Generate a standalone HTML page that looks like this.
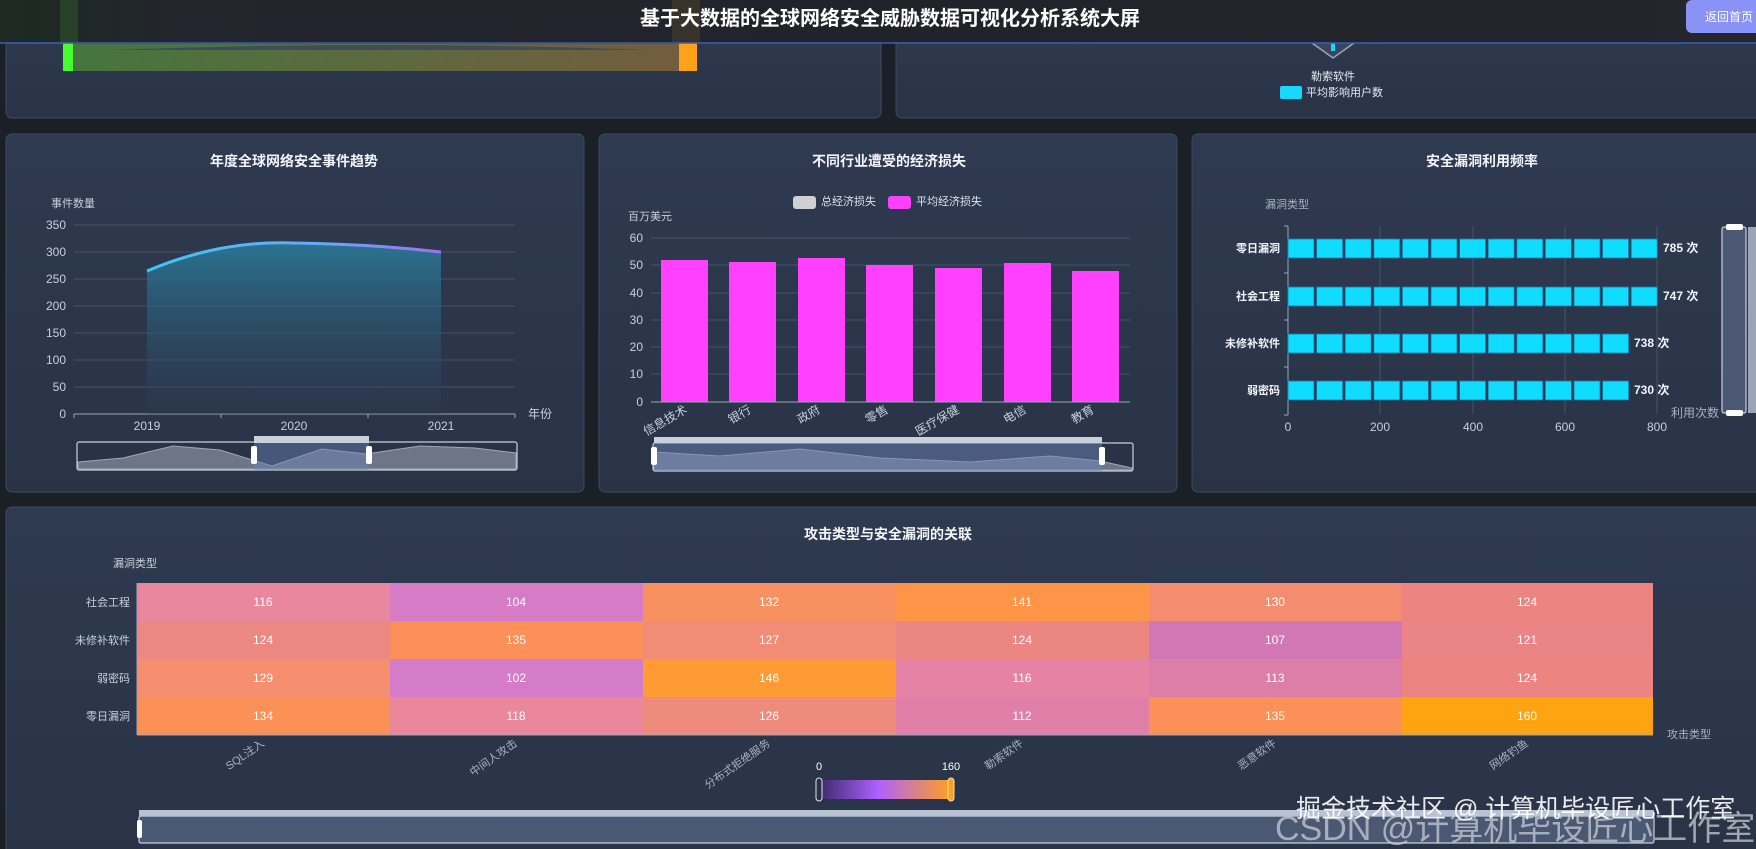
<!DOCTYPE html>
<html><head><meta charset="utf-8"><style>
html,body{margin:0;padding:0;background:#1b1f26;width:1756px;height:849px;overflow:hidden;font-family:"Liberation Sans","Noto Sans CJK SC",sans-serif}
svg{display:block}
</style></head><body>
<svg width="1756" height="849" viewBox="0 0 1756 849" xmlns="http://www.w3.org/2000/svg" font-family="Liberation Sans, Noto Sans CJK SC, sans-serif">
<defs>
<linearGradient id="cardg" x1="0" y1="0" x2="0" y2="1"><stop offset="0" stop-color="#2e3a50"/><stop offset="1" stop-color="#2a3346"/></linearGradient>
<linearGradient id="band" x1="0" y1="0" x2="1" y2="0"><stop offset="0" stop-color="#4e8a3a"/><stop offset="1" stop-color="#8a6a3a"/></linearGradient>
<linearGradient id="line1" x1="0" y1="0" x2="1" y2="0"><stop offset="0" stop-color="#3cc8f0"/><stop offset="0.6" stop-color="#6aa8f6"/><stop offset="1" stop-color="#a070f0"/></linearGradient>
<linearGradient id="area1" x1="0" y1="0" x2="0" y2="1"><stop offset="0" stop-color="#2a7a9a" stop-opacity="0.9"/><stop offset="1" stop-color="#2e3a50" stop-opacity="0.3"/></linearGradient>
<linearGradient id="vm" x1="0" y1="0" x2="1" y2="0"><stop offset="0" stop-color="#3a2a6a"/><stop offset="0.45" stop-color="#b060ff"/><stop offset="1" stop-color="#ffa020"/></linearGradient>
<linearGradient id="hdr" x1="0" y1="0" x2="1" y2="0"><stop offset="0" stop-color="#1e2a22"/><stop offset="0.1" stop-color="#23262c"/><stop offset="0.5" stop-color="#202329"/><stop offset="1" stop-color="#23262c"/></linearGradient>
</defs>
<rect width="1756" height="849" fill="#1b1f26"/>

<rect x="6" y="20" width="875" height="98" rx="6" fill="url(#cardg)" stroke="#3e4b62"/>
<rect x="896" y="20" width="870" height="98" rx="6" fill="url(#cardg)" stroke="#3e4b62"/>
<rect x="73" y="44" width="606" height="27" fill="url(#band)" opacity="0.75"/>
<path d="M110 50 Q380 40 650 50 Z" fill="#3a4660" opacity="0.8"/>
<rect x="63" y="43" width="10" height="28" fill="#44ff2a"/>
<rect x="679" y="43" width="18" height="28" fill="#ffa21a"/>
<path d="M1312 43 L1333 58 L1354 43" fill="#3a4660" stroke="#9aa6b8" stroke-width="1.5"/>
<rect x="1331" y="43" width="4" height="8" fill="#18d8ff"/>
<text x="1333" y="80" font-size="11" fill="#e8ecf2" text-anchor="middle">勒索软件</text>
<rect x="1280" y="86" width="22" height="13" rx="2" fill="#18d8ff"/>
<text x="1306" y="96" font-size="11" fill="#e8ecf2">平均影响用户数</text>

<rect x="0" y="0" width="1756" height="43" fill="url(#hdr)"/>
<rect x="60" y="0" width="18" height="43" fill="#2f5a2a" opacity="0.5"/>
<rect x="672" y="0" width="28" height="43" fill="#5a4a2a" opacity="0.4"/>
<line x1="0" y1="43" x2="1756" y2="43" stroke="#3b5fb8" stroke-width="1.5"/>
<text x="890" y="25" font-size="20" font-weight="bold" fill="#ffffff" text-anchor="middle">基于大数据的全球网络安全威胁数据可视化分析系统大屏</text>
<rect x="1686" y="0" width="80" height="33" rx="6" fill="#8a92f6"/>
<text x="1705" y="21" font-size="12" fill="#ffffff">返回首页</text>

<rect x="6" y="134" width="578" height="358" rx="6" fill="url(#cardg)" stroke="#3e4b62"/>
<text x="294" y="166" font-size="14" font-weight="bold" fill="#f2f4f8" text-anchor="middle">年度全球网络安全事件趋势</text>
<text x="51" y="207" font-size="11" fill="#c8d0dc">事件数量</text>
<g stroke="#46536a" stroke-width="1">
<line x1="74" y1="225" x2="515" y2="225"/><line x1="74" y1="252" x2="515" y2="252"/><line x1="74" y1="279" x2="515" y2="279"/><line x1="74" y1="306" x2="515" y2="306"/><line x1="74" y1="333" x2="515" y2="333"/><line x1="74" y1="360" x2="515" y2="360"/><line x1="74" y1="387" x2="515" y2="387"/>
</g>
<line x1="74" y1="414" x2="515" y2="414" stroke="#9aa6b8"/>
<g stroke="#9aa6b8"><line x1="74" y1="414" x2="74" y2="418"/><line x1="221" y1="414" x2="221" y2="418"/><line x1="368" y1="414" x2="368" y2="418"/><line x1="515" y1="414" x2="515" y2="418"/></g>
<g font-size="12" fill="#c8d0dc" text-anchor="end">
<text x="66" y="229">350</text><text x="66" y="256">300</text><text x="66" y="283">250</text><text x="66" y="310">200</text><text x="66" y="337">150</text><text x="66" y="364">100</text><text x="66" y="391">50</text><text x="66" y="418">0</text>
</g>
<g font-size="12" fill="#c8d0dc" text-anchor="middle"><text x="147" y="430">2019</text><text x="294" y="430">2020</text><text x="441" y="430">2021</text></g>
<text x="528" y="418" font-size="12" fill="#c8d0dc">年份</text>
<path d="M147 271 Q220 240 294 243 Q370 244 441 252 L441 414 L147 414 Z" fill="url(#area1)"/>
<path d="M147 271 Q220 240 294 243 Q370 244 441 252" fill="none" stroke="url(#line1)" stroke-width="3"/>
<rect x="77" y="442" width="440" height="28" rx="2" fill="#2a3346" stroke="#c8d0dc" stroke-width="1.2"/>
<path d="M78 462 L123 458 L173 446 L220 450 L272 466 L322 449 L366 454 L420 446 L475 448 L516 453 L516 469 L78 469 Z" fill="#6e7686" stroke="#a0a8b8"/>
<rect x="254" y="443" width="115" height="27" fill="#6b82b8" opacity="0.45"/>
<rect x="254" y="436" width="115" height="7" fill="#c8d0dc"/>
<rect x="251" y="446" width="6" height="18" rx="2" fill="#fff"/><rect x="366" y="446" width="6" height="18" rx="2" fill="#fff"/>

<rect x="599" y="134" width="578" height="358" rx="6" fill="url(#cardg)" stroke="#3e4b62"/>
<text x="889" y="166" font-size="14" font-weight="bold" fill="#f2f4f8" text-anchor="middle">不同行业遭受的经济损失</text>
<rect x="793" y="196" width="23" height="13" rx="3" fill="#d0d0d4"/>
<text x="821" y="205" font-size="11" fill="#dde2ea">总经济损失</text>
<rect x="888" y="196" width="23" height="13" rx="3" fill="#ff40ff"/>
<text x="916" y="205" font-size="11" fill="#dde2ea">平均经济损失</text>
<text x="628" y="220" font-size="11" fill="#c8d0dc">百万美元</text>
<g stroke="#46536a"><line x1="651" y1="238" x2="1130" y2="238"/><line x1="651" y1="265" x2="1130" y2="265"/><line x1="651" y1="293" x2="1130" y2="293"/><line x1="651" y1="320" x2="1130" y2="320"/><line x1="651" y1="347" x2="1130" y2="347"/><line x1="651" y1="374" x2="1130" y2="374"/></g>
<g font-size="12" fill="#c8d0dc" text-anchor="end"><text x="643" y="242">60</text><text x="643" y="269">50</text><text x="643" y="297">40</text><text x="643" y="324">30</text><text x="643" y="351">20</text><text x="643" y="378">10</text><text x="643" y="406">0</text></g>
<g fill="#ff40ff">
<rect x="661" y="260" width="47" height="142"/><rect x="729" y="262" width="47" height="140"/><rect x="798" y="258" width="47" height="144"/><rect x="866" y="265" width="47" height="137"/><rect x="935" y="268" width="47" height="134"/><rect x="1004" y="263" width="47" height="139"/><rect x="1072" y="271" width="47" height="131"/>
</g>
<line x1="651" y1="402" x2="1130" y2="402" stroke="#9aa6b8"/>
<g font-size="12" fill="#c8d0dc" text-anchor="end">
<text transform="translate(688,412) rotate(-30)">信息技术</text>
<text transform="translate(752,412) rotate(-30)">银行</text>
<text transform="translate(821,412) rotate(-30)">政府</text>
<text transform="translate(889,412) rotate(-30)">零售</text>
<text transform="translate(960,412) rotate(-30)">医疗保健</text>
<text transform="translate(1027,412) rotate(-30)">电信</text>
<text transform="translate(1095,412) rotate(-30)">教育</text>
</g>
<rect x="653" y="443" width="480" height="28" rx="2" fill="#2a3346" stroke="#c8d0dc" stroke-width="1.2"/>
<path d="M654 452 L720 456 L800 449 L880 458 L970 462 L1050 456 L1100 461 L1132 468 L1132 470 L654 470 Z" fill="#6e7686" stroke="#a0a8b8"/>
<rect x="654" y="443" width="448" height="28" fill="#6b82b8" opacity="0.5"/>
<rect x="654" y="437" width="448" height="6" fill="#c8d0dc"/>
<rect x="651" y="447" width="6" height="18" rx="2" fill="#fff"/><rect x="1099" y="447" width="6" height="18" rx="2" fill="#fff"/>

<rect x="1192" y="134" width="580" height="358" rx="6" fill="url(#cardg)" stroke="#3e4b62"/>
<text x="1482" y="166" font-size="14" font-weight="bold" fill="#f2f4f8" text-anchor="middle">安全漏洞利用频率</text>
<text x="1287" y="208" font-size="11" fill="#a8b2c2" text-anchor="middle">漏洞类型</text>
<g stroke="#46536a"><line x1="1380" y1="226" x2="1380" y2="414"/><line x1="1473" y1="226" x2="1473" y2="414"/><line x1="1565" y1="226" x2="1565" y2="414"/><line x1="1657" y1="226" x2="1657" y2="414"/></g>
<line x1="1288" y1="226" x2="1288" y2="415" stroke="#9aa6b8"/>
<g stroke="#9aa6b8"><line x1="1284" y1="226" x2="1288" y2="226"/><line x1="1284" y1="273" x2="1288" y2="273"/><line x1="1284" y1="320" x2="1288" y2="320"/><line x1="1284" y1="367" x2="1288" y2="367"/><line x1="1284" y1="415" x2="1288" y2="415"/></g>
<g id="seg13" fill="#10dcff" stroke="#1478a8" stroke-width="0.8">
<rect x="1288" y="239" width="26" height="19"/><rect x="1316.6" y="239" width="26" height="19"/><rect x="1345.2" y="239" width="26" height="19"/><rect x="1373.8" y="239" width="26" height="19"/><rect x="1402.4" y="239" width="26" height="19"/><rect x="1431" y="239" width="26" height="19"/><rect x="1459.6" y="239" width="26" height="19"/><rect x="1488.2" y="239" width="26" height="19"/><rect x="1516.8" y="239" width="26" height="19"/><rect x="1545.4" y="239" width="26" height="19"/><rect x="1574" y="239" width="26" height="19"/><rect x="1602.6" y="239" width="26" height="19"/><rect x="1631.2" y="239" width="26" height="19"/>
</g>
<use href="#seg13" y="48"/>
<g fill="#10dcff" stroke="#1478a8" stroke-width="0.8" id="seg12">
<rect x="1288" y="334" width="26" height="19"/><rect x="1316.6" y="334" width="26" height="19"/><rect x="1345.2" y="334" width="26" height="19"/><rect x="1373.8" y="334" width="26" height="19"/><rect x="1402.4" y="334" width="26" height="19"/><rect x="1431" y="334" width="26" height="19"/><rect x="1459.6" y="334" width="26" height="19"/><rect x="1488.2" y="334" width="26" height="19"/><rect x="1516.8" y="334" width="26" height="19"/><rect x="1545.4" y="334" width="26" height="19"/><rect x="1574" y="334" width="26" height="19"/><rect x="1602.6" y="334" width="26" height="19"/>
</g>
<use href="#seg12" y="47"/>
<g font-size="11" font-weight="bold" fill="#f2f4f8" text-anchor="end"><text x="1280" y="252">零日漏洞</text><text x="1280" y="300">社会工程</text><text x="1280" y="347">未修补软件</text><text x="1280" y="394">弱密码</text></g>
<g font-size="12" font-weight="bold" fill="#f2f4f8"><text x="1663" y="252">785 次</text><text x="1663" y="300">747 次</text><text x="1634" y="347">738 次</text><text x="1634" y="394">730 次</text></g>
<g font-size="12" fill="#c8d0dc" text-anchor="middle"><text x="1288" y="431">0</text><text x="1380" y="431">200</text><text x="1473" y="431">400</text><text x="1565" y="431">600</text><text x="1657" y="431">800</text></g>
<text x="1671" y="417" font-size="12" fill="#a8b2c2">利用次数</text>
<rect x="1722" y="227" width="24" height="186" rx="2" fill="#4a5874" stroke="#c8d0dc" stroke-width="1.2"/>
<rect x="1748" y="227" width="10" height="186" fill="#9aa6b8"/>
<rect x="1726" y="224" width="17" height="6" rx="2" fill="#fff"/><rect x="1726" y="410" width="17" height="6" rx="2" fill="#fff"/>

<rect x="6" y="507" width="1760" height="350" rx="6" fill="url(#cardg)" stroke="#3e4b62"/>
<text x="888" y="539" font-size="14" font-weight="bold" fill="#f2f4f8" text-anchor="middle">攻击类型与安全漏洞的关联</text>
<text x="113" y="567" font-size="11" fill="#c8d0dc">漏洞类型</text>
<g>
<rect x="137" y="583" width="253" height="38" fill="#e9879e"/><rect x="390" y="583" width="253" height="38" fill="#d67cc6"/><rect x="643" y="583" width="253" height="38" fill="#f99060"/><rect x="896" y="583" width="253" height="38" fill="#fd9447"/><rect x="1149" y="583" width="253" height="38" fill="#f48d6f"/><rect x="1402" y="583" width="251" height="38" fill="#ec8582"/>
<rect x="137" y="621" width="253" height="38" fill="#ec8882"/><rect x="390" y="621" width="253" height="38" fill="#fb9158"/><rect x="643" y="621" width="253" height="38" fill="#f18c77"/><rect x="896" y="621" width="253" height="38" fill="#ec8682"/><rect x="1149" y="621" width="253" height="38" fill="#d077b4"/><rect x="1402" y="621" width="251" height="38" fill="#eb8585"/>
<rect x="137" y="659" width="253" height="38" fill="#f68e70"/><rect x="390" y="659" width="253" height="38" fill="#d57cc8"/><rect x="643" y="659" width="253" height="38" fill="#fe9b35"/><rect x="896" y="659" width="253" height="38" fill="#e682a4"/><rect x="1149" y="659" width="253" height="38" fill="#dc7ea8"/><rect x="1402" y="659" width="251" height="38" fill="#ec8582"/>
<rect x="137" y="697" width="253" height="38" fill="#fb9157"/><rect x="390" y="697" width="253" height="38" fill="#ea879a"/><rect x="643" y="697" width="253" height="38" fill="#ef8b7c"/><rect x="896" y="697" width="253" height="38" fill="#e07fa8"/><rect x="1149" y="697" width="253" height="38" fill="#fb9158"/><rect x="1402" y="697" width="251" height="38" fill="#fea411"/>
</g>
<g font-size="12" fill="#ffffff" text-anchor="middle">
<text x="263" y="606">116</text><text x="516" y="606">104</text><text x="769" y="606">132</text><text x="1022" y="606">141</text><text x="1275" y="606">130</text><text x="1527" y="606">124</text>
<text x="263" y="644">124</text><text x="516" y="644">135</text><text x="769" y="644">127</text><text x="1022" y="644">124</text><text x="1275" y="644">107</text><text x="1527" y="644">121</text>
<text x="263" y="682">129</text><text x="516" y="682">102</text><text x="769" y="682">146</text><text x="1022" y="682">116</text><text x="1275" y="682">113</text><text x="1527" y="682">124</text>
<text x="263" y="720">134</text><text x="516" y="720">118</text><text x="769" y="720">126</text><text x="1022" y="720">112</text><text x="1275" y="720">135</text><text x="1527" y="720">160</text>
</g>
<line x1="137" y1="583" x2="137" y2="735" stroke="#9aa6b8"/>
<line x1="137" y1="735" x2="1653" y2="735" stroke="#9aa6b8"/>
<g font-size="11" fill="#c8d0dc" text-anchor="end"><text x="130" y="606">社会工程</text><text x="130" y="644">未修补软件</text><text x="130" y="682">弱密码</text><text x="130" y="720">零日漏洞</text></g>
<g font-size="11" fill="#a8b2c2" text-anchor="end">
<text transform="translate(265,745) rotate(-35)">SQL注入</text>
<text transform="translate(518,745) rotate(-35)">中间人攻击</text>
<text transform="translate(771,745) rotate(-35)">分布式拒绝服务</text>
<text transform="translate(1024,745) rotate(-35)">勒索软件</text>
<text transform="translate(1277,745) rotate(-35)">恶意软件</text>
<text transform="translate(1529,745) rotate(-35)">网络钓鱼</text>
</g>
<text x="1667" y="738" font-size="11" fill="#a8b2c2">攻击类型</text>
<text x="819" y="770" font-size="11" fill="#ffffff" text-anchor="middle">0</text>
<text x="951" y="770" font-size="11" fill="#ffffff" text-anchor="middle">160</text>
<rect x="819" y="780" width="132" height="19" fill="url(#vm)"/>
<rect x="816" y="778" width="6" height="23" rx="3" fill="#2a3346" stroke="#e0e4ea"/>
<rect x="948" y="778" width="6" height="23" rx="3" fill="#ffa020" stroke="#ffe0a0"/>
<rect x="139" y="816" width="1515" height="27" rx="2" fill="#4a5874" stroke="#c8d0dc" stroke-width="1.2"/>
<rect x="139" y="810" width="1515" height="6" fill="#b8c2d4"/>
<rect x="137" y="820" width="5" height="18" rx="2" fill="#fff"/>
<text x="1275" y="840" font-size="34" fill="#c8ccd4" opacity="0.75">CSDN @计算机毕设匠心工作室</text>
<text x="1296" y="817" font-size="25" fill="#ffffff" opacity="0.9">掘金技术社区 @ 计算机毕设匠心工作室</text>
</svg>
</body></html>
